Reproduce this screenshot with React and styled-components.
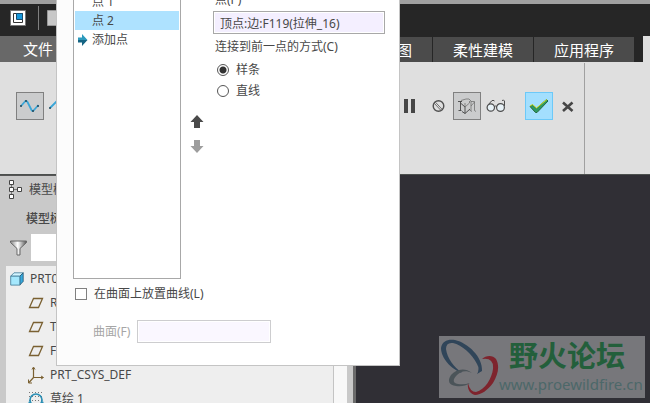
import React, { useState } from "react";
import styled, { createGlobalStyle } from "styled-components";

const FEATURES = [
  { name: "RIGHT", type: "plane" },
  { name: "TOP", type: "plane" },
  { name: "FRONT", type: "plane" },
  { name: "PRT_CSYS_DEF", type: "csys" },
  { name: "草绘 1", type: "sketch" },
];

const PlaneIcon = () => (
  <svg width="16" height="16" viewBox="0 0 16 16" fill="none">
    <path d="M5.5 3.5h9l-4 9h-9z" stroke="#7a6031" strokeWidth="1.3" />
  </svg>
);

const CsysIcon = () => (
  <svg width="18" height="18" viewBox="0 0 18 18" fill="none" stroke="#7a6031">
    <path d="M6.5 11.5V2M6.5 11.5H16M6.5 11.5L2 16.5" strokeWidth="1.2" />
    <path d="M5 3.5L6.5 1 8 3.5M14 10l2.5 1.5L14 13M1.5 13.5V17H5" />
  </svg>
);

const SketchIcon = () => (
  <svg width="16" height="16" viewBox="0 0 16 16" fill="none">
    <path d="M1 1.5h14M1 5.5h14M1 9.5h14" stroke="#777" strokeDasharray="1 2" />
    <circle cx="8" cy="9" r="6" stroke="#2b8fb5" strokeWidth="1.7" />
    <path d="M.5 11.5h2M13.5 11.5h2" stroke="#2b8fb5" strokeWidth="1.7" />
  </svg>
);

const featureIcons = { plane: PlaneIcon, csys: CsysIcon, sketch: SketchIcon };

const PartIcon = () => (
  <svg width="14" height="14" viewBox="0 0 14 14" strokeLinejoin="round">
    <path d="M.7 4.2L4 .8h9.2L9.8 4.2z" fill="#d4f5ff" stroke="#3f7896" strokeWidth=".8" />
    <path d="M9.8 4.2L13.2.8v8.6l-3.4 3.7z" fill="#35a9de" stroke="#28536b" strokeWidth=".8" />
    <path d="M.7 4.2h9.1v8.9H.7z" fill="#a5e8fd" stroke="#3f7896" strokeWidth=".8" />
  </svg>
);

const TreeIcon = () => (
  <svg width="14" height="20" viewBox="0 0 14 20" fill="#fff" stroke="#444">
    <path d="M2.5 3v14M3 9.5h7" stroke="#777" fill="none" />
    <path d="M.5 .5h4v4h-4zM.5 7.5h4v4h-4zM.5 14.5h4v4h-4zM8.5 7.5h4v4h-4z" />
  </svg>
);

const FunnelIcon = () => (
  <svg width="17" height="16" viewBox="0 0 17 16">
    <defs>
      <linearGradient id="funnel">
        <stop offset="0" stopColor="#888" />
        <stop offset=".45" stopColor="#fff" />
        <stop offset="1" stopColor="#555" />
      </linearGradient>
    </defs>
    <path d="M.5 1h16v1.5L10 8.5V15H7V8.5L.5 2.5z" fill="url(#funnel)" stroke="#666" />
  </svg>
);

const SplineIcon = () => (
  <svg width="22" height="16" viewBox="0 0 22 16" fill="none">
    <path d="M2 8L6 3.5Q7 2 8.5 4L12.5 12Q13.5 14 15 12L19.5 7" stroke="#3aa6d8" strokeWidth="1.8" />
    <path
      d="M1 7l2 2M3 7L1 9M6 2l2 2M8 2L6 4M13 12l2 2M15 12l-2 2M18 7l2 2M20 7l-2 2"
      stroke="#264d60"
      strokeWidth=".8"
    />
  </svg>
);

const LineIcon = () => (
  <svg width="22" height="16" viewBox="0 0 22 16" fill="none">
    <path d="M2 10L9 3L19 10" stroke="#3aa6d8" strokeWidth="1.8" />
    <path d="M1 9l2 2M3 9l-2 2" stroke="#264d60" strokeWidth=".8" />
  </svg>
);

const PauseIcon = () => (
  <svg width="12" height="14" viewBox="0 0 12 14">
    <path d="M1 0h4v14H1zM8 0h4v14H8z" fill="#464646" />
  </svg>
);

const NoPreviewIcon = () => (
  <svg width="14" height="14" viewBox="0 0 14 14" fill="none" stroke="#505050">
    <circle cx="7.5" cy="7" r="5.3" strokeWidth="1.4" />
    <path d="M4.5 3.3l6.6 7M3.5 4.5l6.500 7" strokeWidth=".8" />
  </svg>
);

const WireIcon = () => (
  <svg width="20" height="18" viewBox="0 0 20 18" fill="none" stroke="#444">
    <path d="M1 4.5h4M3.5 4.5v9M1.5 13.500h3M3.500 6L8 10v6.500M8 16.500l5-4.500M5 14.500l3 2" strokeWidth=".9" />
    <path
      d="M4 3.500L9 2h3l2 2M8 10l4.500-4V4M8 6v4M14 4v9.500M14 4.500h3.500v9L19 14.500M17.500 5L14 9M12.500 13l2.500 1.500"
      stroke="#666"
      strokeWidth=".7"
    />
  </svg>
);

const GlassesIcon = () => (
  <svg width="20" height="14" viewBox="0 0 20 14" stroke="#4d4d4d">
    <path d="M1.200 7L5.500 2Q7 .5 8.500 2M18.500 7V2Q18 .5 16 1.500" fill="none" />
    <circle cx="4.800" cy="8.500" r="3.700" fill="#e8f2f7" strokeWidth="1.200" />
    <circle cx="14.500" cy="8.500" r="3.900" fill="#e8f2f7" strokeWidth="1.200" />
    <path d="M8.500 7.500Q9.500 6.500 10.600 7.500" fill="none" />
  </svg>
);

const CheckIcon = () => (
  <svg width="20" height="16" viewBox="0 0 20 16">
    <path d="M1 8.500L3.500 7L7.500 10.500L17.500 1.500L19 3L8 14.500H6.500z" fill="#2d9a63" stroke="#26683c" />
    <path d="M1 8L3.500 6.500L7.500 10L18 1.500" fill="none" stroke="#cddc1d" />
  </svg>
);

const CloseIcon = () => (
  <svg width="14" height="12" viewBox="0 0 14 12">
    <path d="M2 2.500L11.500 11M11.500 2.500L2 11" stroke="#464646" strokeWidth="2.600" />
  </svg>
);

const ArrowUpIcon = () => (
  <svg width="14" height="14" viewBox="0 0 14 14">
    <path d="M7 0l6.500 7H10v6H4V7H.5z" fill="currentColor" />
  </svg>
);

const ArrowDownIcon = () => (
  <svg width="14" height="14" viewBox="0 0 14 14">
    <path d="M7 13L.5 6H4V0h6v6h3.500z" fill="currentColor" />
  </svg>
);

const CurrentIcon = () => (
  <svg width="10" height="12" viewBox="0 0 10 12">
    <path d="M0 3.500h4V0l5.500 6H0z" fill="#2d9abd" />
    <path d="M0 8.500h4V12l5.500-6H0z" fill="#156483" />
  </svg>
);

const WindowIcon = () => (
  <svg width="16" height="16" viewBox="0 0 16 16">
    <path d="M.5.5h15v15H.5z" fill="#fff" stroke="#777" />
    <path d="M3.500 3.500h9v9h-9z" fill="#fff" stroke="#333" />
    <path d="M6.500 3.500h6v6h-6z" fill="#1698db" stroke="#174d70" />
  </svg>
);

const NewIcon = () => (
  <svg width="16" height="16" viewBox="0 0 16 16">
    <path d="M.5.5h11l4 4v11H.5z" fill="#c8c8c8" stroke="#999" />
  </svg>
);

const RingsLogo = () => (
  <svg width="60" height="62" viewBox="0 0 60 62">
    <path
      d="M23 37C12 33 2 22 2 12C3 5 9 3 16 4C29 7 44 21 43 35L38 38Q41 33 38 28C33 18 23 9 14 7Q7 6 7 13C8 22 15 31 23 37z"
      fill="#304559"
    />
    <path
      d="M43 23C47 19 54 19 57 23C61 30 59 39 54 47C49 54 42 59 36 59C31 58 28 53 29 47Q31 56 37 56C46 54 53 42 54 33Q55 21 43 23z"
      fill="#7e242d"
    />
    <path
      d="M33 37C26 31 17 33 12 39C8 45 10 49 17 50Q25 51 31 47Q25 49 19 48C13 47 14 43 18 39C22 35 27 34 33 37z"
      fill="#4b5459"
    />
  </svg>
);

const App = () => {
  const [selected, setSelected] = useState("点 2");
  const [method, setMethod] = useState("spline");
  const [onSurface, setOnSurface] = useState(false);

  return (
    <Page>
      <GlobalStyle />
      <TitleBar>
        <TitleButton aria-label="窗口">
          <WindowIcon />
        </TitleButton>
        <TitleDivider />
        <TitleButton aria-label="新建">
          <NewIcon />
        </TitleButton>
      </TitleBar>

      <TabBar>
        <FileTab>文件</FileTab>
        <Tabs>
          <Tab>视图</Tab>
          <Tab>柔性建模</Tab>
          <Tab>应用程序</Tab>
        </Tabs>
        <TabEnd />
      </TabBar>

      <Ribbon>
        <RibbonGroup>
          <Tools>
            <ToolButton $active aria-label="样条曲线">
              <SplineIcon />
            </ToolButton>
            <ToolButton aria-label="折线">
              <LineIcon />
            </ToolButton>
          </Tools>
          <Commands>
            <Tools>
              <ToolButton aria-label="暂停">
                <PauseIcon />
              </ToolButton>
              <ToolButton aria-label="无预览">
                <NoPreviewIcon />
              </ToolButton>
              <ToolButton $active aria-label="连接预览">
                <WireIcon />
              </ToolButton>
              <ToolButton aria-label="特征预览">
                <GlassesIcon />
              </ToolButton>
            </Tools>
            <Tools>
              <ToolButton $primary aria-label="确定">
                <CheckIcon />
              </ToolButton>
              <ToolButton aria-label="取消">
                <CloseIcon />
              </ToolButton>
            </Tools>
          </Commands>
        </RibbonGroup>
      </Ribbon>

      <Workspace>
        <Sidebar>
          <SidebarHeader>
            <TreeIcon />
            模型树
          </SidebarHeader>
          <SidebarTitle>模型树</SidebarTitle>
          <FilterRow>
            <FunnelIcon />
            <FilterInput type="text" aria-label="过滤" />
          </FilterRow>
          <TreeBox>
            <Tree>
              <TreeItem>
                <PartIcon />
                PRT0001.PRT
              </TreeItem>
              {FEATURES.map((f) => {
                const Icon = featureIcons[f.type];
                return (
                  <TreeItem key={f.name} $child>
                    <IconCell>
                      <Icon />
                    </IconCell>
                    {f.name}
                  </TreeItem>
                );
              })}
            </Tree>
            <ScrollTrack />
          </TreeBox>
        </Sidebar>
        <Canvas>
          <Watermark>
            <RingsLogo />
            <WatermarkText>
              <WatermarkName>野火论坛</WatermarkName>
              <WatermarkUrl>www.proewildfire.cn</WatermarkUrl>
            </WatermarkText>
          </Watermark>
        </Canvas>
      </Workspace>

      <Panel>
        <PanelBody>
          <PointList>
            {["点 1", "点 2", "添加点"].map((p) => (
              <li key={p}>
                <PointButton $selected={p === selected} onClick={() => setSelected(p)}>
                  <MarkerCell>{p === "添加点" && <CurrentIcon />}</MarkerCell>
                  {p}
                </PointButton>
              </li>
            ))}
          </PointList>
          <MoveButtons>
            <MoveButton aria-label="上移">
              <ArrowUpIcon />
            </MoveButton>
            <MoveButton aria-label="下移" disabled>
              <ArrowDownIcon />
            </MoveButton>
          </MoveButtons>
          <PointForm>
            <FieldLabel htmlFor="point">点(P)</FieldLabel>
            <TextBox id="point" type="text" defaultValue="顶点:边:F119(拉伸_16)" />
            <Methods>
              <Legend>连接到前一点的方式(C)</Legend>
              <Option>
                <Radio
                  name="method"
                  checked={method === "spline"}
                  onChange={() => setMethod("spline")}
                />
                样条
              </Option>
              <Option>
                <Radio
                  name="method"
                  checked={method === "line"}
                  onChange={() => setMethod("line")}
                />
                直线
              </Option>
            </Methods>
          </PointForm>
        </PanelBody>
        <SurfaceToggle>
          <CheckBox checked={onSurface} onChange={(e) => setOnSurface(e.target.checked)} />
          在曲面上放置曲线(L)
        </SurfaceToggle>
        <SurfaceRow>
          <SurfaceLabel htmlFor="surface">曲面(F)</SurfaceLabel>
          <SurfaceBox id="surface" type="text" disabled={!onSurface} />
        </SurfaceRow>
      </Panel>
    </Page>
  );
};

const GlobalStyle = createGlobalStyle`
  * {
    box-sizing: border-box;
  }
  body {
    margin: 0;
    color: #484848;
    font: 12px/18px "Noto Sans", "Noto Sans CJK SC", sans-serif;
  }
  button, input {
    margin: 0;
    color: inherit;
    font: inherit;
  }
  svg {
    display: block;
    flex: none;
  }
`;

const Page = styled.div`
  position: relative;
  display: flex;
  flex-direction: column;
  height: 100vh;
  overflow: hidden;
  background: #dfdfdf;
`;

const TitleBar = styled.div`
  display: flex;
  flex: none;
  align-items: center;
  gap: 8px;
  height: 36px;
  padding: 0 10px 4px;
  border-top: 4px solid #a0a0a0;
  background: #262626;
`;

const TitleButton = styled.button`
  padding: 0;
  border: none;
  background: none;
`;

const TitleDivider = styled.span`
  width: 1px;
  height: 24px;
  margin-left: 4px;
  background: #808080;
`;

const TabBar = styled.div`
  display: flex;
  flex: none;
  justify-content: space-between;
  height: 26px;
  background: #262626;
`;

const Tabs = styled.div`
  display: flex;
  gap: 1px;
  margin-left: auto;
  padding: 1px 9px 0 0;
`;

const Tab = styled.button`
  padding: 0 20px;
  border: none;
  background: #4b4b4b;
  color: #fff;
  font-size: 15px;
  line-height: 22px;
`;

const FileTab = styled(Tab)`
  padding: 0 23px;
  background: #686868;
`;

const TabEnd = styled.div`
  width: 7px;
  background: #dfdfdf;
`;

const Ribbon = styled.div`
  display: flex;
  flex: none;
  height: 113px;
  padding: 1px 65px 0 0;
  border-bottom: 1px solid #4c504e;
`;

const RibbonGroup = styled.div`
  display: flex;
  flex: 1;
  align-items: flex-start;
  justify-content: space-between;
  padding: 29px 2px 0 16px;
  border-right: 1px solid #a0a0a0;
`;

const Tools = styled.div`
  display: flex;
  gap: 1px;
`;

const Commands = styled.div`
  display: flex;
  gap: 15px;
`;

const ToolButton = styled.button`
  display: flex;
  align-items: center;
  justify-content: center;
  width: 28px;
  height: 28px;
  padding: 0;
  border: 1px solid
    ${(props) => (props.$primary ? "#6cc9f8" : props.$active ? "#808080" : "transparent")};
  background: ${(props) => (props.$primary ? "#a3dffe" : props.$active ? "#cbcccd" : "none")};
`;

const Workspace = styled.div`
  display: flex;
  flex: 1;
  min-height: 0;
`;

const Sidebar = styled.div`
  display: flex;
  flex: none;
  flex-direction: column;
  width: 356px;
  border-top: 1px solid #555;
  border-right: 3px solid #6b6b6b;
  background: #c9c9c9;
`;

const SidebarHeader = styled.div`
  display: flex;
  align-items: center;
  gap: 6px;
  height: 28px;
  padding-left: 9px;
`;

const SidebarTitle = styled.div`
  height: 30px;
  padding-left: 26px;
  font-weight: 500;
  line-height: 30px;
`;

const FilterRow = styled.label`
  display: flex;
  align-items: center;
  gap: 4px;
  height: 27px;
  padding: 0 6px 0 10px;
`;

const FilterInput = styled.input`
  flex: 1;
  min-width: 0;
  height: 27px;
  border: none;
  background: #fff;
`;

const TreeBox = styled.div`
  display: flex;
  flex: 1;
  min-height: 0;
  margin: 5px 6px 0 6px;
  background: #eee;
`;

const Tree = styled.ul`
  flex: 1;
  margin: 0;
  padding: 1px 0 0 4px;
  overflow: hidden;
  list-style: none;
`;

const TreeItem = styled.li`
  display: flex;
  align-items: center;
  gap: 6px;
  height: 24px;
  padding-left: ${(props) => (props.$child ? "18px" : "0")};
`;

const IconCell = styled.span`
  display: flex;
  justify-content: center;
  width: 16px;
`;

const ScrollTrack = styled.div`
  width: 14px;
  border-left: 1px solid #c4c4c4;
  background: #f8f8f8;
`;

const Canvas = styled.div`
  position: relative;
  flex: 1;
  background: #302f35;
`;

const Watermark = styled.div`
  position: absolute;
  right: 5px;
  bottom: 5px;
  display: flex;
  width: 206px;
  height: 62px;
  background: #77777b;
`;

const WatermarkText = styled.div`
  flex: 1;
  white-space: nowrap;
`;

const WatermarkName = styled.div`
  padding: 2px 0 0 10px;
  color: #235f3b;
  font-size: 29px;
  font-weight: 700;
  line-height: 36px;
`;

const WatermarkUrl = styled.div`
  color: #4c6869;
  font-size: 15px;
  line-height: 20px;
`;

// the panel drops down from the ribbon and covers the tree
const Panel = styled.div`
  position: absolute;
  top: -20px;
  left: 56px;
  width: 344px;
  padding: 0 14px 22px 16px;
  border: 1px solid #c4c4c4;
  background: linear-gradient(to right, #fcfcfc 43px, #fff 43px);
`;

const PanelBody = styled.div`
  display: grid;
  grid-template-columns: 108px 32px minmax(0, 1fr);
  height: 298px;
`;

const PointList = styled.ul`
  margin: 0;
  padding: 10px 1px 0;
  border: 1px solid #a8a8a8;
  background: #fff;
  list-style: none;
`;

const PointButton = styled.button`
  display: flex;
  align-items: center;
  gap: 3px;
  width: 100%;
  height: 19px;
  padding: 0 0 0 2px;
  border: none;
  background: ${(props) => (props.$selected ? "#aee2ff" : "none")};
  text-align: left;
`;

const MarkerCell = styled.span`
  display: flex;
  justify-content: center;
  width: 12px;
`;

const MoveButtons = styled.div`
  display: flex;
  flex-direction: column;
  align-items: center;
  padding-top: 128px;
`;

const MoveButton = styled.button`
  display: flex;
  align-items: center;
  height: 25px;
  padding: 0;
  border: none;
  background: none;
  color: #4a4a4a;

  &:disabled {
    color: #9d9d9d;
  }
`;

const PointForm = styled.div`
  display: flex;
  flex-direction: column;
  padding-top: 10px;
`;

const FieldLabel = styled.label`
  height: 20px;
  padding-left: 2px;
`;

const TextBox = styled.input`
  width: 100%;
  height: 23px;
  padding: 0 6px;
  border: 1px solid #a8a8a8;
  background: #f4efff;
  box-shadow: inset 0 0 0 1px #fff;
`;

const Methods = styled.fieldset`
  margin: 0;
  padding: 0 0 0 4px;
  border: none;
`;

const Legend = styled.legend`
  margin-left: -2px;
  padding: 4px 0 3px;
`;

const Option = styled.label`
  display: flex;
  align-items: center;
  gap: 7px;
  height: 21px;
`;

const Radio = styled.input.attrs({ type: "radio" })`
  width: 12px;
  height: 12px;
  border: 1px solid #555;
  border-radius: 50%;
  background: #fff;
  appearance: none;

  &:checked {
    background: radial-gradient(circle, #333 3px, #fff 4px);
  }
`;

const SurfaceToggle = styled.label`
  display: flex;
  align-items: center;
  gap: 7px;
  height: 30px;
  padding-left: 2px;
`;

const CheckBox = styled.input.attrs({ type: "checkbox" })`
  width: 12px;
  height: 12px;
  border: 1px solid #808080;
  background: #fff;
  appearance: none;

  &:checked {
    background: #404040;
    box-shadow: inset 0 0 0 2px #fff;
  }
`;

const SurfaceRow = styled.div`
  display: flex;
  align-items: center;
  gap: 7px;
  padding: 11px 0 0 20px;
`;

const SurfaceLabel = styled.label`
  color: #a6a6a6;
`;

const SurfaceBox = styled.input`
  width: 134px;
  height: 23px;
  border: 1px solid #cdcdcf;
  background: #faf7ff;
  box-shadow: inset 0 0 0 1px #fff;
`;

export default App;
